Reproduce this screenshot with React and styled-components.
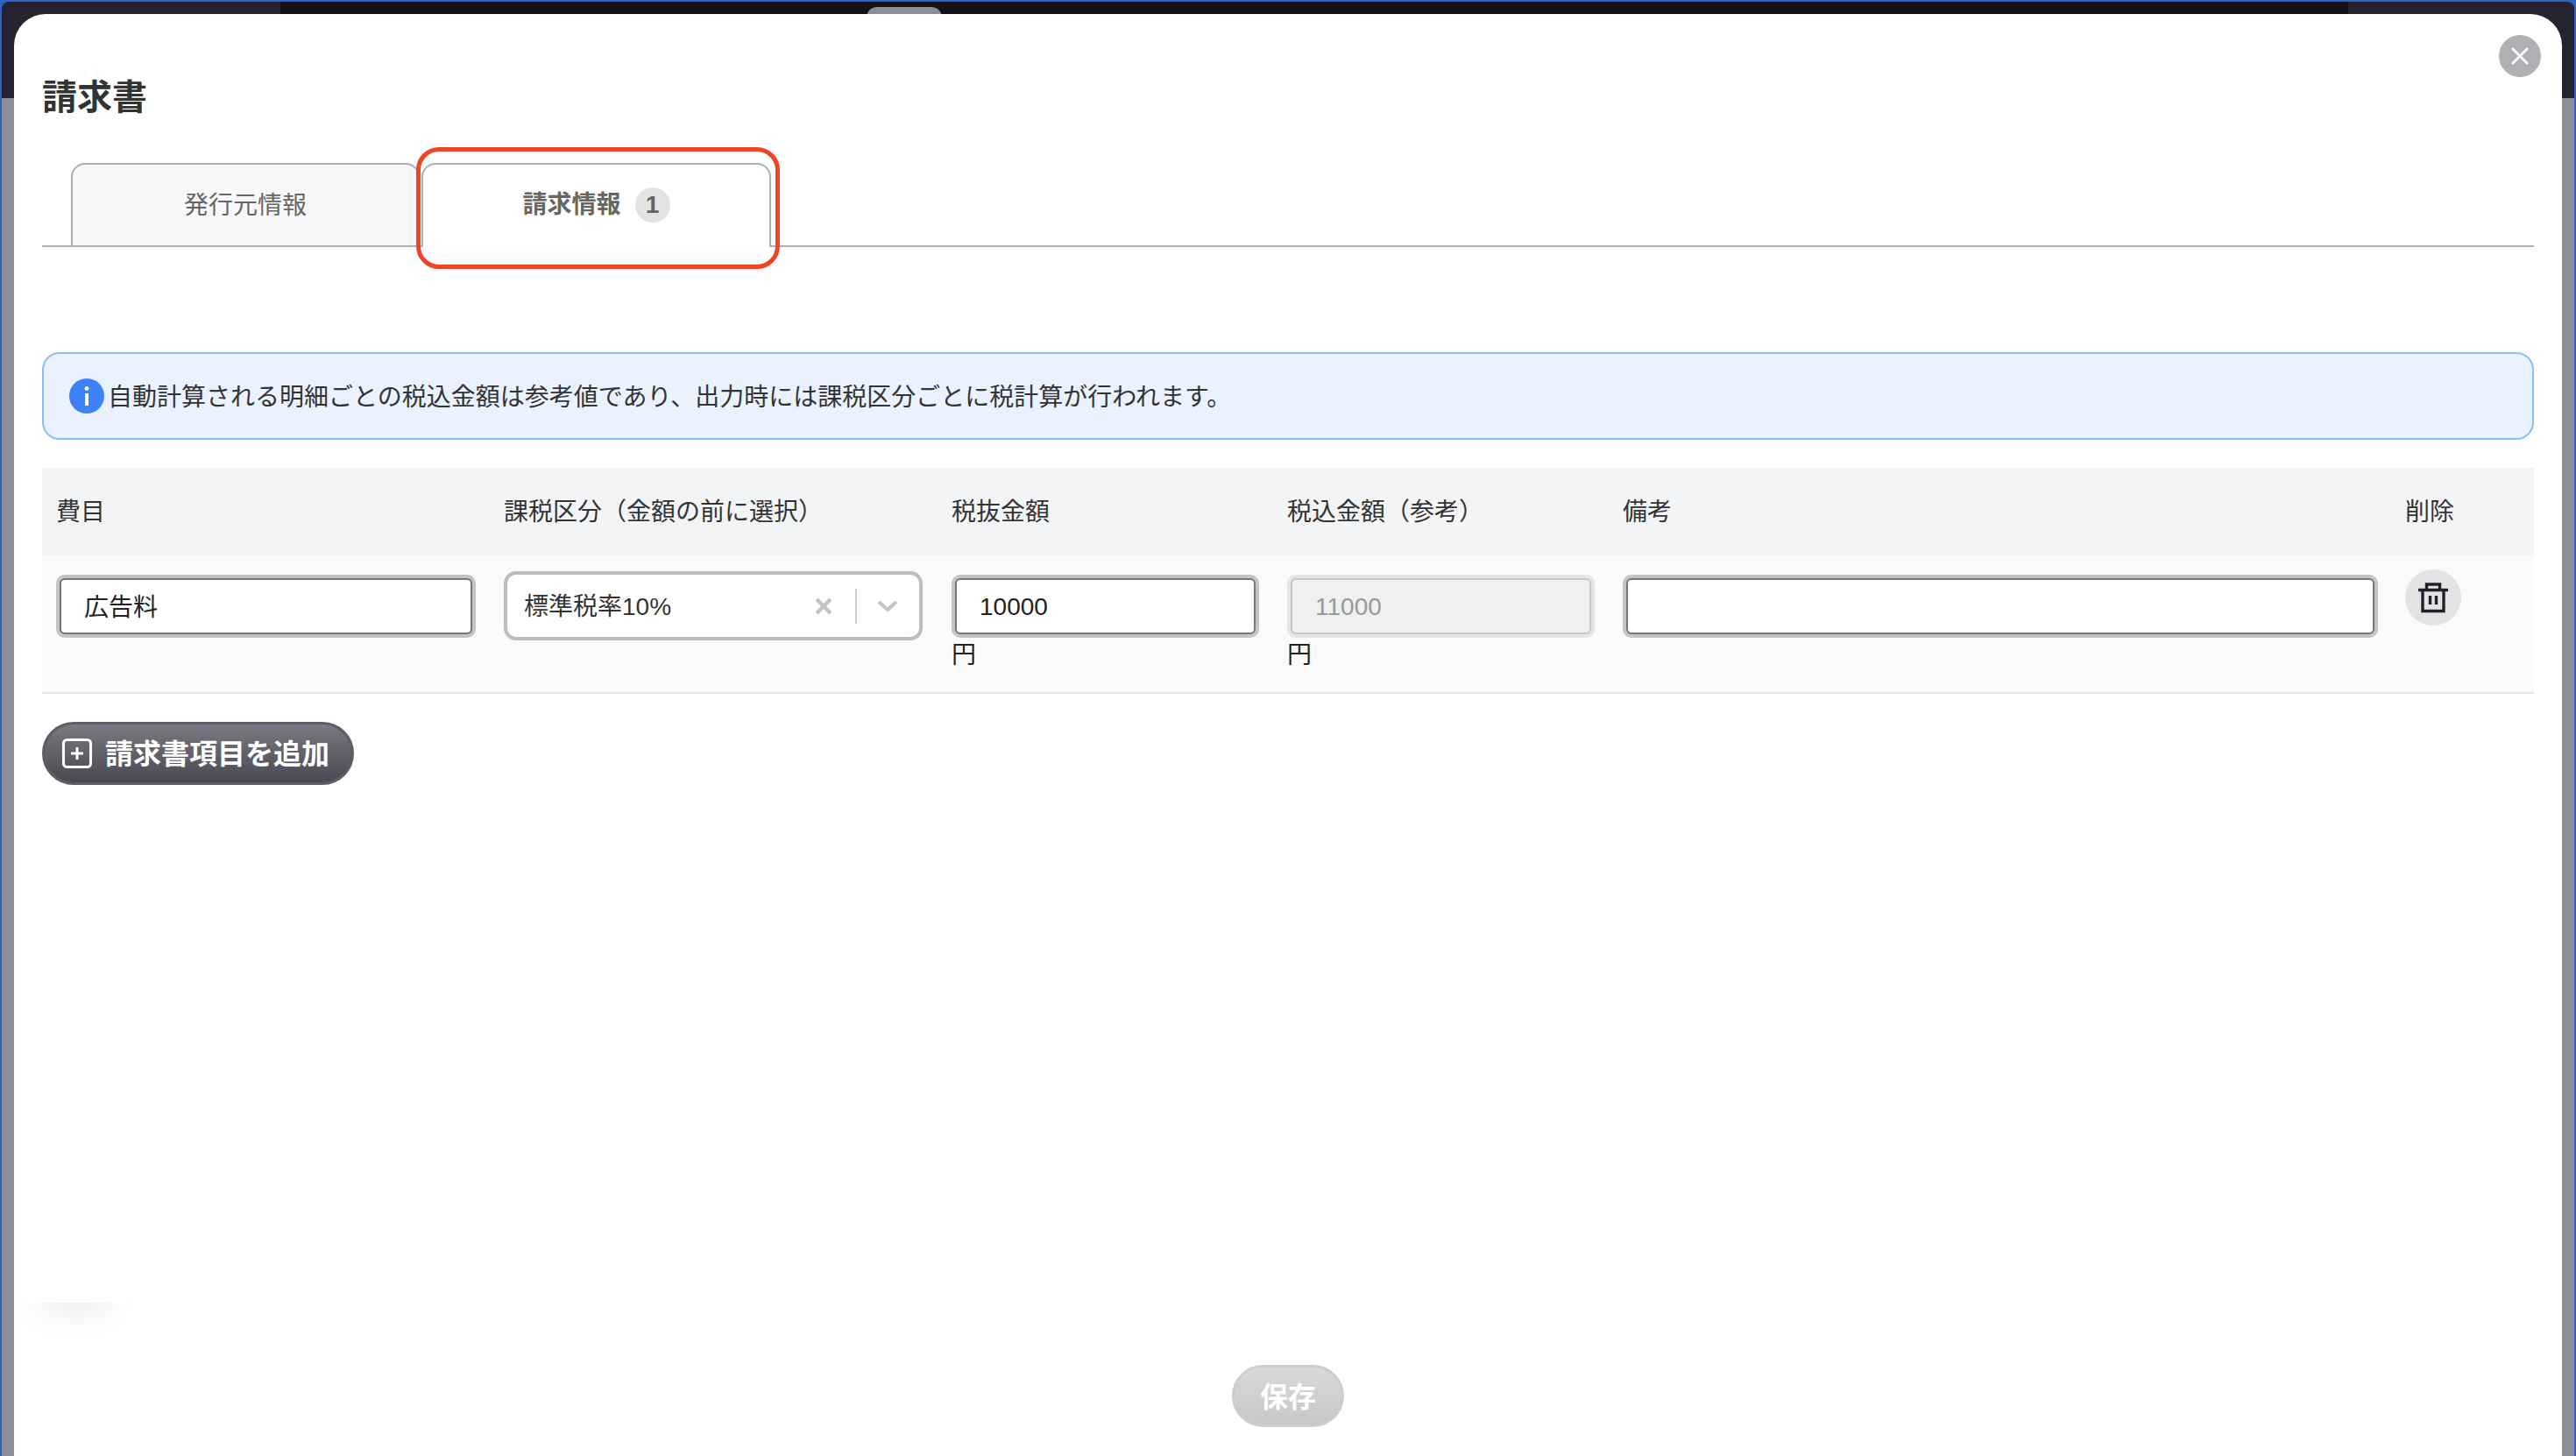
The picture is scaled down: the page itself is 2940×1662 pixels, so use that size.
import React from "react";
import styled, { createGlobalStyle } from "styled-components";

const GlobalStyle = createGlobalStyle`
  html, body {
    margin: 0;
    padding: 0;
    background: #2a62c9;
  }
  * {
    box-sizing: border-box;
  }
  body {
    font-family: "Liberation Sans", "Noto Sans CJK JP", sans-serif;
    color: #333;
  }
`;

const Screen = styled.div`
  position: relative;
  width: 2940px;
  height: 1662px;
  overflow: hidden;
  display: flex;
  padding: 2px 2px 0;
  background: #2a62c9;
`;

const Backdrop = styled.div`
  flex: 1;
  display: flex;
  padding: 14px 14px 0;
  border-radius: 8px 8px 0 0;
  background:
    linear-gradient(#141218, #141218) 318px 0 / 2360px 110px no-repeat,
    linear-gradient(#26232e, #26232e) 0 0 / 100% 110px no-repeat,
    #8e8c94;
`;

const Handle = styled.div`
  position: absolute;
  top: 8px;
  left: 989px;
  width: 86px;
  height: 12px;
  border-radius: 14px 14px 0 0;
  background: #8e8c94;
`;

const Modal = styled.div`
  position: relative;
  flex: 1;
  display: flex;
  flex-direction: column;
  padding: 0 32px 33px;
  overflow: hidden;
  border-radius: 36px 36px 0 0;
  background: #fff;
`;

const CloseButton = styled.button`
  position: absolute;
  top: 24px;
  right: 24px;
  width: 48px;
  height: 48px;
  display: flex;
  align-items: center;
  justify-content: center;
  padding: 0;
  border: 0;
  border-radius: 50%;
  background: #b1b0b4;
`;

const Title = styled.h1`
  margin: 70px 0 50px;
  font-size: 40px;
  line-height: 50px;
  font-weight: 700;
  color: #333;
`;

const TabBar = styled.div`
  display: flex;
  gap: 2px;
  padding-left: 33px;
  border-bottom: 2px solid #adadb2;
`;

const Tab = styled.div`
  position: relative;
  width: ${(p) => (p.$active ? "399px" : "398px")};
  height: ${(p) => (p.$active ? "96px" : "94px")};
  margin-bottom: ${(p) => (p.$active ? "-2px" : "0")};
  display: flex;
  align-items: center;
  justify-content: center;
  gap: 16px;
  padding-top: ${(p) => (p.$active ? "0" : "2px")};
  padding-bottom: ${(p) => (p.$active ? "2px" : "0")};
  border: 2px solid #adadb2;
  border-bottom: 0;
  border-radius: 16px 16px 0 0;
  background: ${(p) => (p.$active ? "#fff" : "#f8f8fa")};
  color: #666;
  font-size: 28px;
  line-height: 40px;
  font-weight: ${(p) => (p.$active ? 700 : 400)};
`;

const Badge = styled.span`
  width: 40px;
  height: 40px;
  display: flex;
  align-items: center;
  justify-content: center;
  border-radius: 50%;
  background: #e3e3e3;
`;

const Highlight = styled.div`
  position: absolute;
  top: -20px;
  left: -8px;
  right: -12px;
  bottom: -25px;
  border: 5px solid #ee4527;
  border-radius: 26px;
  pointer-events: none;
`;

const Notice = styled.div`
  height: 100px;
  margin-top: 120px;
  display: flex;
  align-items: center;
  gap: 4px;
  padding-left: 29px;
  border: 2px solid #8bbdf6;
  border-radius: 20px;
  background: #e9f2fe;
  color: #333;
  font-size: 28px;
`;

const NoticeText = styled.span`
  margin-bottom: 3px;
`;

const Table = styled.div`
  margin-top: 32px;
`;

const columns = "511px 511px 383px 383px 894px 162px";

const HeadRow = styled.div`
  display: grid;
  grid-template-columns: ${columns};
  align-items: center;
  height: 100px;
  background: #f3f4f6;
`;

const HeadCell = styled.div`
  padding: 2px 0 0 ${(p) => (p.$tight ? "15px" : "16px")};
  font-size: 28px;
  line-height: 40px;
  color: #333;
`;

const BodyRow = styled.div`
  display: grid;
  grid-template-columns: ${columns};
  height: 158px;
  border-bottom: 2px solid #e3e3e3;
  background: #fafafa;
`;

const BodyCell = styled.div`
  padding: 16px 20px 0 20px;
`;

const TextInput = styled.div`
  height: 64px;
  margin-top: 10px;
  display: flex;
  align-items: center;
  padding: ${(p) => (p.$kanji ? "0 0 3px 26px" : "2px 0 0 26px")};
  border: 2px solid ${(p) => (p.$disabled ? "#c8c8c8" : "#777")};
  border-radius: 6px;
  box-shadow: 0 0 0 4px ${(p) => (p.$disabled ? "#e4e4e4" : "#c4c4c4")};
  background: ${(p) => (p.$disabled ? "#f0f0f0" : "#fff")};
  color: ${(p) => (p.$disabled ? "#999" : "#222")};
  font-size: 28px;
`;

const Unit = styled.div`
  margin: 8px 0 0 -4px;
  font-size: 28px;
  line-height: 32px;
  color: #222;
`;

const SelectBox = styled.div`
  height: 79px;
  margin: 2px -3px 0 -4px;
  display: flex;
  align-items: center;
  padding-left: 19px;
  border: 4px solid #bdbdbd;
  border-radius: 14px;
  background: #fff;
  color: #333;
  font-size: 28px;
`;

const SelectValue = styled.span`
  flex: 1;
  margin-bottom: 3px;
`;

const Separator = styled.span`
  width: 2px;
  height: 40px;
  margin: 0 23px 0 26px;
  background: #ccc;
`;

const ClearIcon = styled.svg`
  display: block;
`;

const ChevronIcon = styled.svg`
  display: block;
  margin-right: 24px;
`;

const DeleteButton = styled.button`
  width: 64px;
  height: 64px;
  margin-left: -5px;
  display: flex;
  align-items: center;
  justify-content: center;
  padding: 0;
  border: 0;
  border-radius: 50%;
  background: #e3e3e3;
`;

const AddButton = styled.button`
  align-self: flex-start;
  width: 356px;
  height: 72px;
  margin-top: 32px;
  display: flex;
  align-items: center;
  gap: 15px;
  padding: 0 0 0 20px;
  border: 3px solid #5e5d65;
  border-radius: 36px;
  background: linear-gradient(#7a7981, #4a4953);
  color: #fff;
  font-family: inherit;
  font-size: 32px;
  font-weight: 700;
`;

const ButtonLabel = styled.span`
  display: block;
  margin-bottom: 4px;
`;

const Ghost = styled.div`
  position: absolute;
  left: 2px;
  top: 1316px;
  width: 135px;
  height: 155px;
  border-radius: 20px;
  background: #fff;
  box-shadow: 0 40px 40px -28px rgba(0, 0, 0, 0.08);
`;

const Footer = styled.div`
  margin-top: auto;
  display: flex;
  justify-content: center;
`;

const SaveButton = styled.button`
  width: 128px;
  height: 71px;
  padding: 0;
  border: 3px solid #cdcdcf;
  border-radius: 36px;
  background: linear-gradient(#d8d8da, #c8c8ca);
  color: #fff;
  font-family: inherit;
  font-size: 32px;
  font-weight: 700;
`;

const InfoIcon = () => (
  <svg width="40" height="40" viewBox="0 0 40 40">
    <circle cx="20" cy="20" r="20" fill="#3c82f6" />
    <circle cx="20" cy="11.5" r="2.4" fill="#fff" />
    <rect x="18" y="17" width="4" height="14" fill="#fff" />
  </svg>
);

const TrashIcon = () => (
  <svg width="36" height="36" viewBox="0 0 36 36" fill="none" stroke="#22212b" strokeWidth="3.4">
    <path d="M1 9.5h34" />
    <path d="M10.5 9V3h15v6" />
    <path d="M6 9v24.5h24V9" />
    <path d="M14.5 16v10M21.5 16v10" />
  </svg>
);

const PlusBoxIcon = () => (
  <svg width="34" height="34" viewBox="0 0 34 34" fill="none" stroke="#fff" strokeWidth="3">
    <rect x="1.5" y="1.5" width="31" height="31" rx="4" />
    <path d="M17 10v14M10 17h14" />
  </svg>
);

const App = () => {
  return (
    <>
      <GlobalStyle />
      <Screen>
        <Handle />
        <Backdrop>
          <Modal>
            <CloseButton aria-label="閉じる">
              <svg width="22" height="22" viewBox="0 0 22 22" fill="none" stroke="#fff" strokeWidth="2.6">
                <path d="M2 2l18 18M20 2L2 20" />
              </svg>
            </CloseButton>
            <Ghost />
            <Title>請求書</Title>
            <TabBar>
              <Tab>発行元情報</Tab>
              <Tab $active>
                請求情報
                <Badge>1</Badge>
                <Highlight />
              </Tab>
            </TabBar>
            <Notice>
              <InfoIcon />
              <NoticeText>自動計算される明細ごとの税込金額は参考値であり、出力時には課税区分ごとに税計算が行われます。</NoticeText>
            </Notice>
            <Table>
              <HeadRow>
                <HeadCell>費目</HeadCell>
                <HeadCell>課税区分（金額の前に選択）</HeadCell>
                <HeadCell>税抜金額</HeadCell>
                <HeadCell>税込金額（参考）</HeadCell>
                <HeadCell>備考</HeadCell>
                <HeadCell $tight>削除</HeadCell>
              </HeadRow>
              <BodyRow>
                <BodyCell>
                  <TextInput $kanji>広告料</TextInput>
                </BodyCell>
                <BodyCell>
                  <SelectBox>
                    <SelectValue>標準税率10%</SelectValue>
                    <ClearIcon width="20" height="20" viewBox="0 0 20 20" fill="none" stroke="#c4c4c4" strokeWidth="4.5">
                      <path d="M2 2l16 16M18 2L2 18" />
                    </ClearIcon>
                    <Separator />
                    <ChevronIcon width="24" height="14" viewBox="0 0 24 14" fill="none" stroke="#c4c4c4" strokeWidth="4">
                      <path d="M2 2l10 9 10-9" />
                    </ChevronIcon>
                  </SelectBox>
                </BodyCell>
                <BodyCell>
                  <TextInput>10000</TextInput>
                  <Unit>円</Unit>
                </BodyCell>
                <BodyCell>
                  <TextInput $disabled>11000</TextInput>
                  <Unit>円</Unit>
                </BodyCell>
                <BodyCell>
                  <TextInput />
                </BodyCell>
                <BodyCell>
                  <DeleteButton aria-label="削除">
                    <TrashIcon />
                  </DeleteButton>
                </BodyCell>
              </BodyRow>
            </Table>
            <AddButton>
              <PlusBoxIcon />
              <ButtonLabel>請求書項目を追加</ButtonLabel>
            </AddButton>
            <Footer>
              <SaveButton>
                <ButtonLabel>保存</ButtonLabel>
              </SaveButton>
            </Footer>
          </Modal>
        </Backdrop>
      </Screen>
    </>
  );
};

export default App;
